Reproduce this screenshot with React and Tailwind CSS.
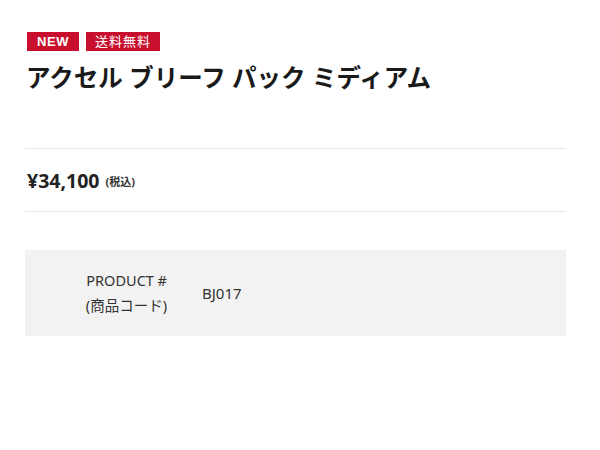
export default function App() {
  const jp = { fontFamily: '"Noto Sans", "Noto Sans CJK JP", sans-serif' };
  return (
    <div className="w-[600px] h-[450px] bg-white" style={jp}>
      <div className="ml-[25px] w-[541px] pt-[32px]">
        <div className="flex gap-[7px] ml-[2px]">
          <span className="h-[19px] w-[52px] bg-[#c8102e] text-white text-[13px] font-bold leading-[19px] text-center tracking-[0.5px]" style={{ fontFamily: '"Liberation Sans", sans-serif' }}>NEW</span>
          <span className="h-[19px] w-[74px] bg-[#c8102e] text-white text-[13px] leading-[19px] text-center tracking-[1px]">送料無料</span>
        </div>
        <h1 className="mt-[12px] ml-[1px] text-[24.5px] leading-[30px] font-bold text-[#1a1a1a]">アクセル ブリーフ パック ミディアム</h1>
        <div className="mt-[55px] h-px bg-[#e8e8e8]" />
        <div className="h-[62px] flex items-center pl-[2px] pt-[1px]">
          <span className="text-[19.5px] font-bold text-[#222]">¥34,100</span>
          <span className="ml-[6px] mt-[4px] text-[11px] font-bold text-[#333]">(税込)</span>
        </div>
        <div className="h-px bg-[#e8e8e8]" />
        <div className="mt-[38px] h-[86px] bg-[#f2f2f2] flex items-center text-[14.5px] text-[#333]">
          <div className="w-[142px] text-right leading-[25px]">
            <div>PRODUCT #</div>
            <div>(商品コード)</div>
          </div>
          <div className="ml-[35px] text-[15px]">BJ017</div>
        </div>
      </div>
    </div>
  );
}
